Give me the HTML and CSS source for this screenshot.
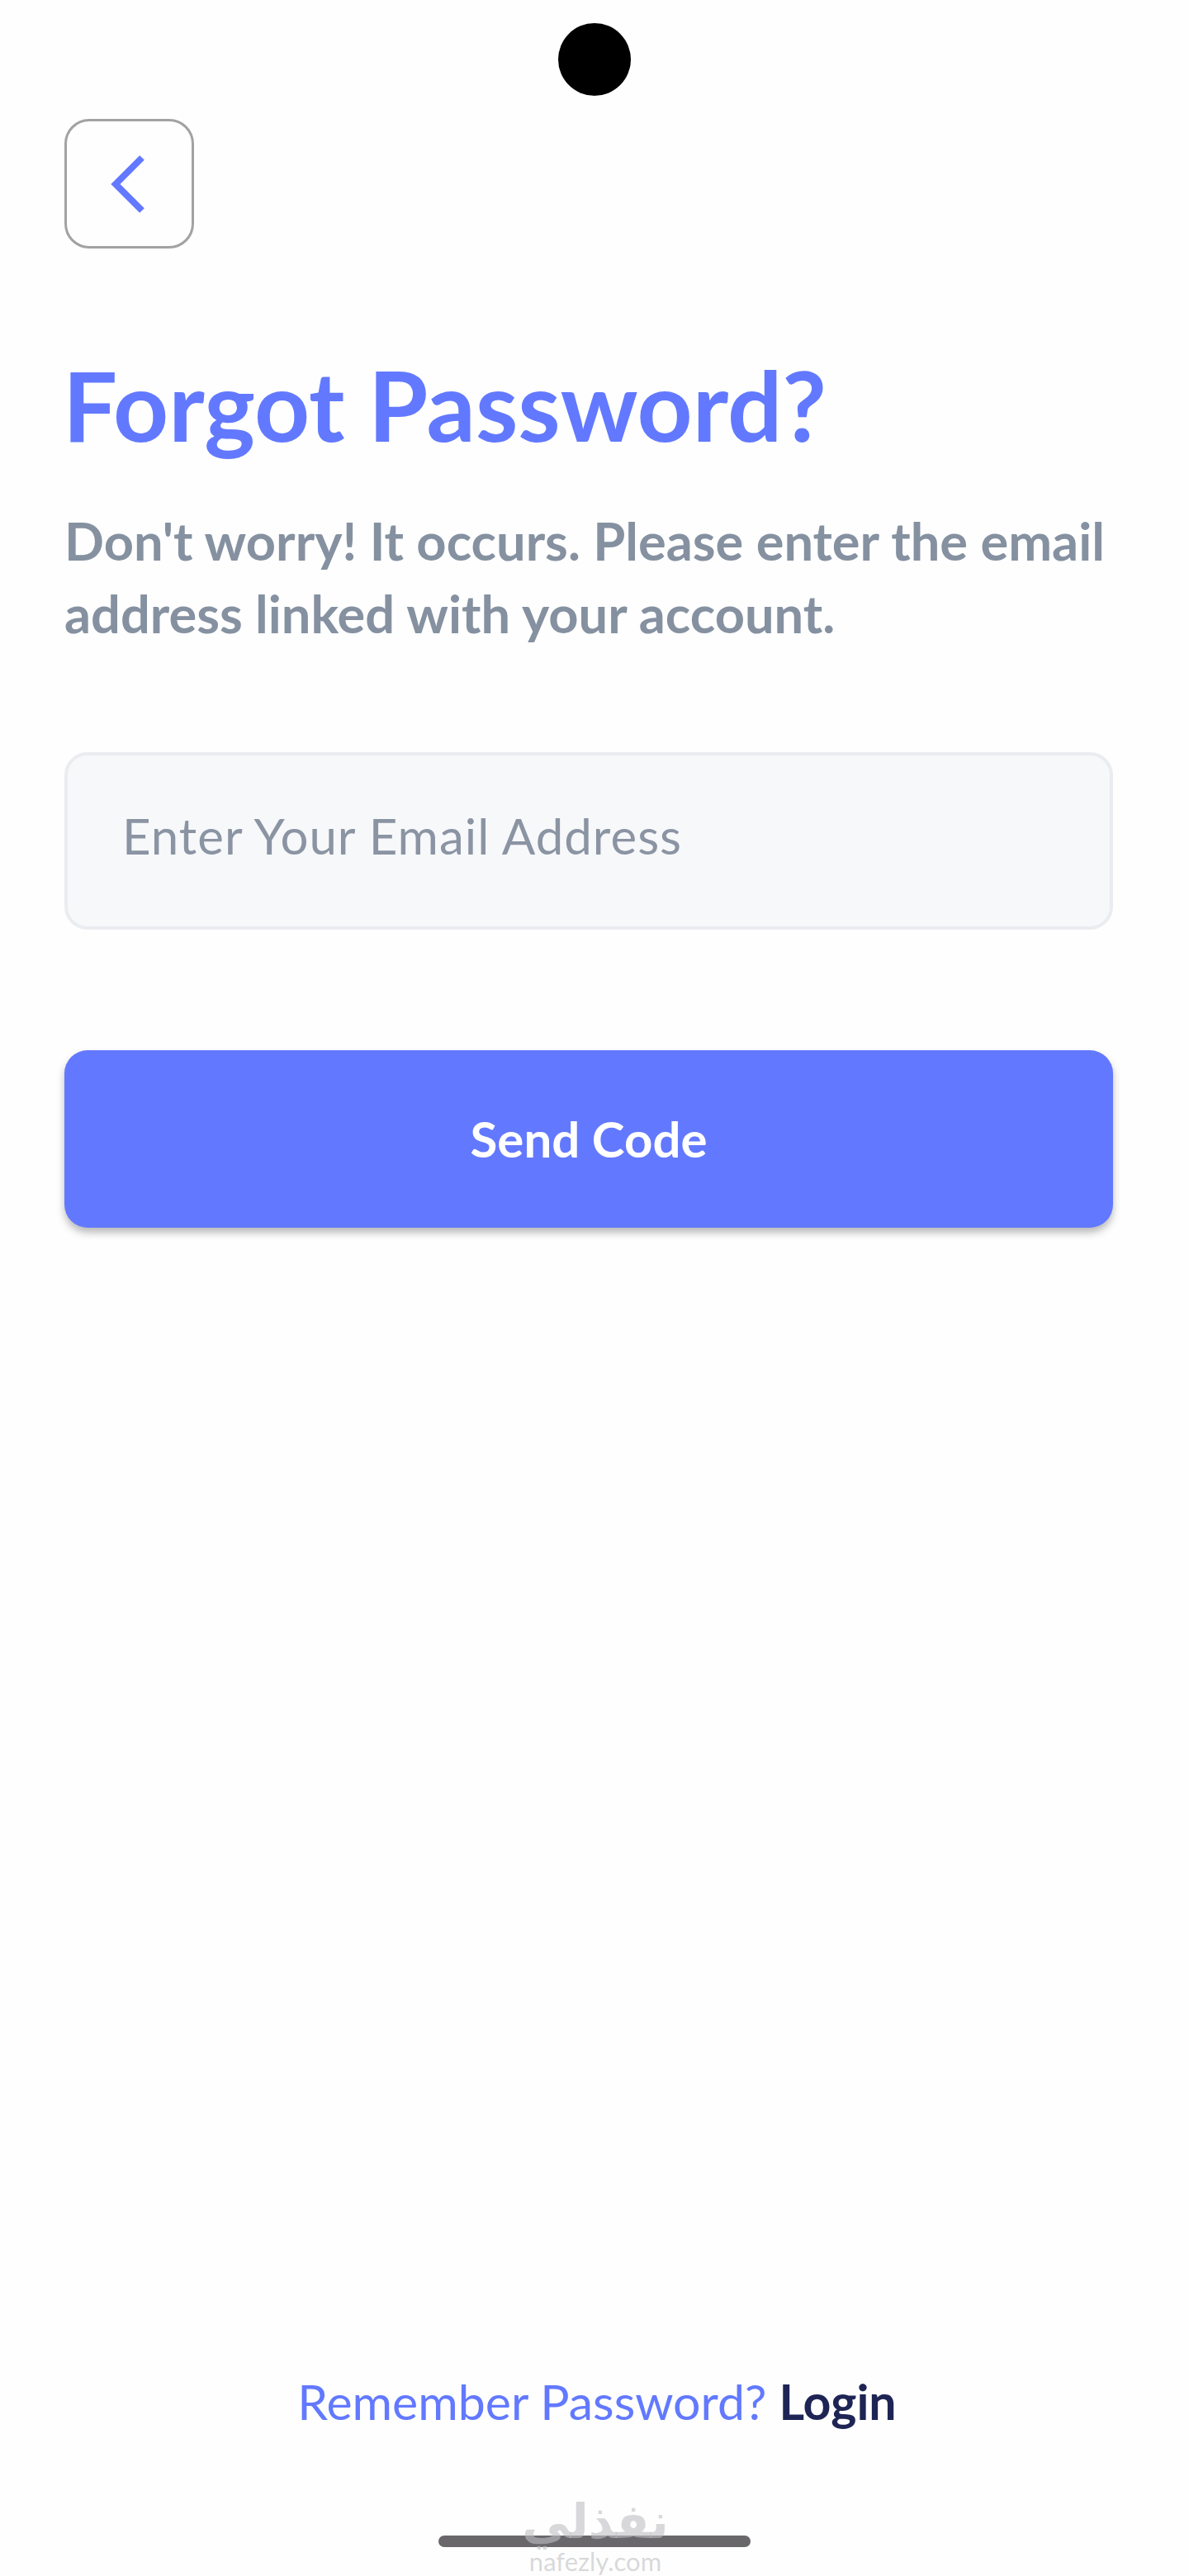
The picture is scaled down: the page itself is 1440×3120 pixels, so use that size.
FILE: index.html
```html
<!DOCTYPE html>
<html lang="en">
<head>
<meta charset="utf-8">
<title>Forgot Password</title>
<link rel="stylesheet" href="styles.css">
</head>
<body>
<main class="screen">
  <div class="camera"></div>
  <button class="back" type="button" aria-label="Back">
    <svg class="back-icon" width="44" height="72" viewBox="0 0 44 72"><path d="M39 4 L7 36 L39 68" fill="none" stroke="#6279ff" stroke-width="8"/></svg>
  </button>
  <h1 class="title">Forgot Password?</h1>
  <p class="lead">Don't worry! It occurs. Please enter the email address linked with your account.</p>
  <form class="form">
    <input class="email" type="email" placeholder="Enter Your Email Address">
    <button class="send" type="button">Send Code</button>
  </form>
  <p class="remember">Remember Password? <a class="login" href="#">Login</a></p>
  <div class="home-bar"></div>
  <div class="watermark">
    <span class="wm-ar">نفذلي</span>
    <span class="wm-en">nafezly.com</span>
  </div>
</main>
</body>
</html>
```

FILE: styles.css
```css
* { box-sizing: border-box; }
html, body { margin: 0; padding: 0; background: #fefefe; }
.screen {
  position: relative;
  width: 1440px;
  height: 3120px;
  padding: 144px 92px 35px 78px;
  display: flex;
  flex-direction: column;
  align-items: stretch;
  font-family: Lato, "Noto Sans", sans-serif;
  overflow: hidden;
}
.camera {
  position: absolute;
  left: 676px;
  top: 28px;
  width: 88px;
  height: 88px;
  border-radius: 50%;
  background: #000;
}
.back {
  width: 157px;
  height: 157px;
  padding: 0 3px 0 0;
  display: flex;
  align-items: center;
  justify-content: center;
  background: #fefefe;
  border: 3px solid #a2a2a2;
  border-radius: 30px;
}
.back-icon { display: block; }
.title {
  margin: 119px 0 0 -2px;
  font-size: 117px;
  line-height: 140px;
  font-weight: 700;
  color: #6279ff;
  white-space: nowrap;
}
.lead {
  margin: 51px 0 0;
  font-size: 63.2px;
  line-height: 88px;
  font-weight: 700;
  color: #8591a0;
}
.form {
  margin-top: 124px;
  display: flex;
  flex-direction: column;
  gap: 146px;
}
.email {
  height: 215px;
  width: 100%;
  padding: 0 66px 14px;
  font: 400 60px Lato, "Noto Sans", sans-serif;
  letter-spacing: 1px;
  color: #8591a0;
  background: #f7f8fa;
  border: 4px solid #ebecf0;
  border-radius: 28px;
  outline: none;
}
.email::placeholder { color: #8b94a3; opacity: 1; }
.send {
  height: 215px;
  width: 100%;
  padding-bottom: 2px;
  font: 700 60px Lato, "Noto Sans", sans-serif;
  color: #fff;
  background: #6279ff;
  border: 0;
  border-radius: 28px;
  box-shadow: 0 6px 10px rgba(60, 60, 60, 0.35);
}
.remember {
  margin: auto 0 0;
  padding-left: 20px;
  text-align: center;
  font-size: 59px;
  line-height: 70px;
  font-weight: 400;
  color: #6279ff;
}
.login {
  font-weight: 700;
  color: #1e2454;
  text-decoration: none;
}
.home-bar {
  margin: 127px 0 0 453px;
  width: 378px;
  height: 14px;
  border-radius: 7px;
  background: #69676a;
}
.watermark {
  position: absolute;
  left: 616px;
  top: 3020px;
  width: 210px;
  display: flex;
  flex-direction: column;
  align-items: center;
  color: rgba(190, 190, 195, 0.6);
}
.wm-ar {
  font-family: "DejaVu Sans", sans-serif;
  font-size: 58px;
  line-height: 68px;
  font-weight: 700;
}
.wm-en {
  font-family: Lato, sans-serif;
  font-size: 31px;
  line-height: 28px;
}
```
